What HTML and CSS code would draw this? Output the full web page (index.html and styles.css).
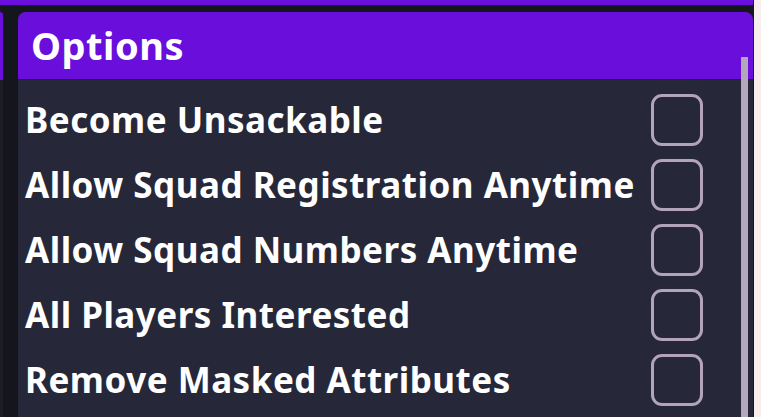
FILE: index.html
```html
<!DOCTYPE html>
<html>
<head>
<meta charset="utf-8">
<link rel="stylesheet" href="styles.css">
</head>
<body>
<div class="page">
  <div class="workspace">
    <div class="topbar"></div>
    <div class="main">
      <div class="sliver"><div class="sliver-head"></div><div class="sliver-body"></div></div>
      <section class="panel">
        <header class="panel-head">Options</header>
        <div class="panel-body">
          <div class="row"><span class="label">Become Unsackable</span><span class="check"></span></div>
          <div class="row"><span class="label">Allow Squad Registration Anytime</span><span class="check"></span></div>
          <div class="row"><span class="label">Allow Squad Numbers Anytime</span><span class="check"></span></div>
          <div class="row"><span class="label">All Players Interested</span><span class="check"></span></div>
          <div class="row"><span class="label">Remove Masked Attributes</span><span class="check"></span></div>
        </div>
        <div class="scrollbar"></div>
      </section>
    </div>
  </div>
  <div class="edge"></div>
</div>
</body>
</html>
```

FILE: styles.css
```css
html, body {
  margin: 0;
  padding: 0;
  height: 100%;
  overflow: hidden;
  background: #15151d;
  font-family: "Noto Sans", "Open Sans", sans-serif;
}
.page {
  display: flex;
  height: 417px;
}
.workspace {
  width: 753px;
  display: flex;
  flex-direction: column;
}
.edge {
  width: 7px;
  margin-left: 1px;
  background: #f9eeee;
}
.topbar {
  height: 5px;
  background: #6a0fdb;
}
.main {
  flex: 1;
  display: flex;
  gap: 15px;
  padding-top: 7px;
  min-height: 0;
}
.sliver {
  width: 3px;
  display: flex;
  flex-direction: column;
}
.sliver-head {
  height: 68px;
  background: #6a0fdb;
  border-top-right-radius: 3px;
}
.sliver-body {
  flex: 1;
  background: #1d1d28;
}
.panel {
  flex: 1;
  position: relative;
  display: flex;
  flex-direction: column;
  border-radius: 8px 8px 0 0;
  overflow: hidden;
  background: #262839;
}
.panel-head {
  height: 67px;
  border-bottom: 1px solid #1f1f2d;
  background: #6a0fdb;
  color: #ffffff;
  font-weight: 700;
  font-size: 38px;
  letter-spacing: 0.5px;
  line-height: 67px;
  padding-left: 13px;
}
.panel-body {
  padding: 7px 50px 0 7px;
  display: flex;
  flex-direction: column;
}
.row {
  height: 65px;
  display: flex;
  align-items: center;
  justify-content: space-between;
}
.label {
  color: #ffffff;
  font-weight: 700;
  font-size: 35px;
  letter-spacing: 0.5px;
  line-height: 44px;
}
.check {
  width: 46px;
  height: 46px;
  border: 3px solid #b3a4ba;
  border-radius: 11px;
  flex: none;
}
.scrollbar {
  position: absolute;
  right: 5px;
  top: 45px;
  bottom: 0;
  width: 7px;
  background: #b4a6bc;
}
```
